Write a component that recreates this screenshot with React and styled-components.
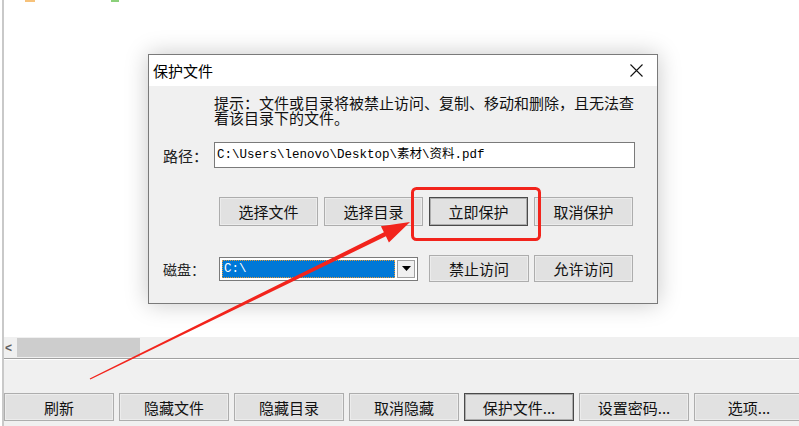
import React from "react";
import styled, { createGlobalStyle } from "styled-components";

const GlobalStyle = createGlobalStyle`
  html, body { margin: 0; padding: 0; background: #fff; }
  body { font-family: "Noto Sans CJK SC", "Noto Sans", sans-serif; color: #000; }
  * { box-sizing: border-box; }
`;

const Frame = styled.div`
  position: relative;
  width: 799px;
  height: 426px;
  overflow: hidden;
  background: #fff;
`;

const Page = styled.div`
  margin-left: 2px;
  width: 797px;
  height: 426px;
  border-left: 2px solid #c9c9c9;
  display: flex;
  flex-direction: column;
`;

const Canvas = styled.div`
  height: 337px;
  display: flex;
  flex-direction: column;
`;

const IconStrip = styled.div`
  display: flex;
  height: 2px;
  padding-left: 21px;
  gap: 76px;
`;

const TinyIcon = styled.div`
  width: ${(p) => p.w}px;
  height: 2px;
  background: ${(p) => p.c};
`;

const Dialog = styled.div`
  margin: 52px 0 0 144px;
  width: 510px;
  height: 250px;
  border: 1px solid #7a7a7a;
  background: #f0f0f0;
  box-shadow: 0 0 22px rgba(0, 0, 0, 0.22);
  display: flex;
  flex-direction: column;
`;

const TitleBar = styled.div`
  height: 31px;
  background: #fff;
  display: flex;
  align-items: center;
  justify-content: space-between;
  padding: 0 14px 0 4px;
  font-size: 15px;
`;

const CloseX = styled.svg`
  width: 13px;
  height: 13px;
`;

const Body = styled.div`
  flex: 1;
  padding: 9px 0 0 14px;
  display: flex;
  flex-direction: column;
`;

const Hint = styled.div`
  margin-left: 51px;
  font-size: 15px;
  line-height: 15px;
  width: 430px;
  color: #111;
`;

const Row = styled.div`
  display: flex;
  align-items: center;
  margin-top: ${(p) => p.mt}px;
  height: ${(p) => p.h}px;
`;

const Label = styled.div`
  width: ${(p) => p.w}px;
  font-size: ${(p) => p.fs || 15}px;
  color: #222;
`;

const PathInput = styled.div`
  width: 421px;
  height: 26px;
  background: #fff;
  border: 1px solid #7a7a7a;
  padding-left: 2px;
  font-family: "Liberation Mono", "Noto Sans CJK SC", monospace;
  font-size: 12.5px;
  line-height: 24px;
  white-space: nowrap;
`;

const BtnGroup = styled.div`
  display: flex;
  gap: ${(p) => p.gap}px;
  margin-left: ${(p) => p.ml || 0}px;
`;

const Btn = styled.div`
  width: ${(p) => p.w}px;
  height: ${(p) => p.h}px;
  flex: none;
  background: #e1e1e1;
  border: 1px solid ${(p) => (p.def ? "#4a4a4a" : "#adadad")};
  box-shadow: ${(p) =>
    p.def ? "inset 0 0 0 1px #adadad" : "inset 0 0 0 1px #ececec"};
  display: flex;
  align-items: center;
  justify-content: center;
  font-size: 15px;
  color: #111;
  white-space: nowrap;
`;

const Combo = styled.div`
  width: 199px;
  height: 24px;
  border: 1px solid #7a7a7a;
  background: #fff;
  display: flex;
  align-items: stretch;
  padding: 2px;
  gap: 2px;
  margin-right: 11px;
`;

const ComboValue = styled.div`
  flex: 1;
  background: #0078d7;
  outline: 1px dotted #e09a3a;
  outline-offset: -1px;
  color: #fff;
  font-family: "Liberation Mono", monospace;
  font-size: 12.5px;
  line-height: 18px;
  padding-left: 2px;
`;

const DropBtn = styled.div`
  width: 18px;
  background: #f0f0f0;
  border: 1px solid #a0a0a0;
  display: flex;
  align-items: center;
  justify-content: center;
`;

const Scrollbar = styled.div`
  height: 21px;
  background: #f0f0f0;
  display: flex;
  align-items: center;
  padding: 1px 0;
`;

const ScrollArrow = styled.div`
  width: 13px;
  font-size: 12px;
  color: #606060;
  font-family: "Liberation Sans", sans-serif;
  font-weight: bold;
  padding-left: 1px;
`;

const Thumb = styled.div`
  width: 123px;
  height: 19px;
  background: #cdcdcd;
`;

const Separator = styled.div`
  height: 2px;
  border-top: 1px solid #a0a0a0;
  border-bottom: 1px solid #fff;
`;

const Toolbar = styled.div`
  flex: 1;
  background: #f0f0f0;
  padding-top: 33px;
`;

const Overlay = styled.svg`
  position: absolute;
  left: 0;
  top: 0;
  pointer-events: none;
`;

const bottomButtons = [
  "刷新",
  "隐藏文件",
  "隐藏目录",
  "取消隐藏",
  "保护文件...",
  "设置密码...",
  "选项...",
];

export default function App() {
  return (
    <Frame>
      <GlobalStyle />
      <Page>
        <Canvas>
          <IconStrip>
            <TinyIcon w={10} c="#f7c27a" />
            <TinyIcon w={8} c="#8bd07a" />
          </IconStrip>
          <Dialog>
            <TitleBar>
              <span>保护文件</span>
              <CloseX viewBox="0 0 13 13">
                <path d="M0.5 0.5 L12.5 12.5 M12.5 0.5 L0.5 12.5" stroke="#111" strokeWidth="1.1" />
              </CloseX>
            </TitleBar>
            <Body>
              <Hint>提示：文件或目录将被禁止访问、复制、移动和删除，且无法查看该目录下的文件。</Hint>
              <Row mt={17} h={26}>
                <Label w={51}>路径：</Label>
                <PathInput>C:\Users\lenovo\Desktop\素材\资料.pdf</PathInput>
              </Row>
              <Row mt={29} h={29}>
                <BtnGroup gap={6} ml={56}>
                  <Btn w={99} h={29}>选择文件</Btn>
                  <Btn w={99} h={29}>选择目录</Btn>
                  <Btn w={99} h={29} def>立即保护</Btn>
                  <Btn w={99} h={29}>取消保护</Btn>
                </BtnGroup>
              </Row>
              <Row mt={29} h={27}>
                <Label w={56} fs={14}>磁盘：</Label>
                <Combo>
                  <ComboValue>C:\</ComboValue>
                  <DropBtn>
                    <svg width="9" height="5" viewBox="0 0 9 5">
                      <path d="M0 0 H9 L4.5 5 Z" fill="#000" />
                    </svg>
                  </DropBtn>
                </Combo>
                <BtnGroup gap={5}>
                  <Btn w={100} h={27}>禁止访问</Btn>
                  <Btn w={99} h={27}>允许访问</Btn>
                </BtnGroup>
              </Row>
            </Body>
          </Dialog>
        </Canvas>
        <Scrollbar>
          <ScrollArrow>&lt;</ScrollArrow>
          <Thumb />
        </Scrollbar>
        <Separator />
        <Toolbar>
          <BtnGroup gap={5}>
            {bottomButtons.map((t) => (
              <Btn key={t} w={110} h={28} def={t === "保护文件..."}>
                {t}
              </Btn>
            ))}
          </BtnGroup>
        </Toolbar>
      </Page>
      <Overlay width="799" height="426" viewBox="0 0 799 426">
        <rect x="412.5" y="188.5" width="127" height="51" rx="4" fill="none" stroke="#f2241c" strokeWidth="3" />
        <polygon
          points="410,222 388.9,242.4 385.9,236.3 90.3,379.5 89.7,378.5 383.9,232.3 380.9,226.2"
          fill="#f2241c"
        />
      </Overlay>
    </Frame>
  );
}
